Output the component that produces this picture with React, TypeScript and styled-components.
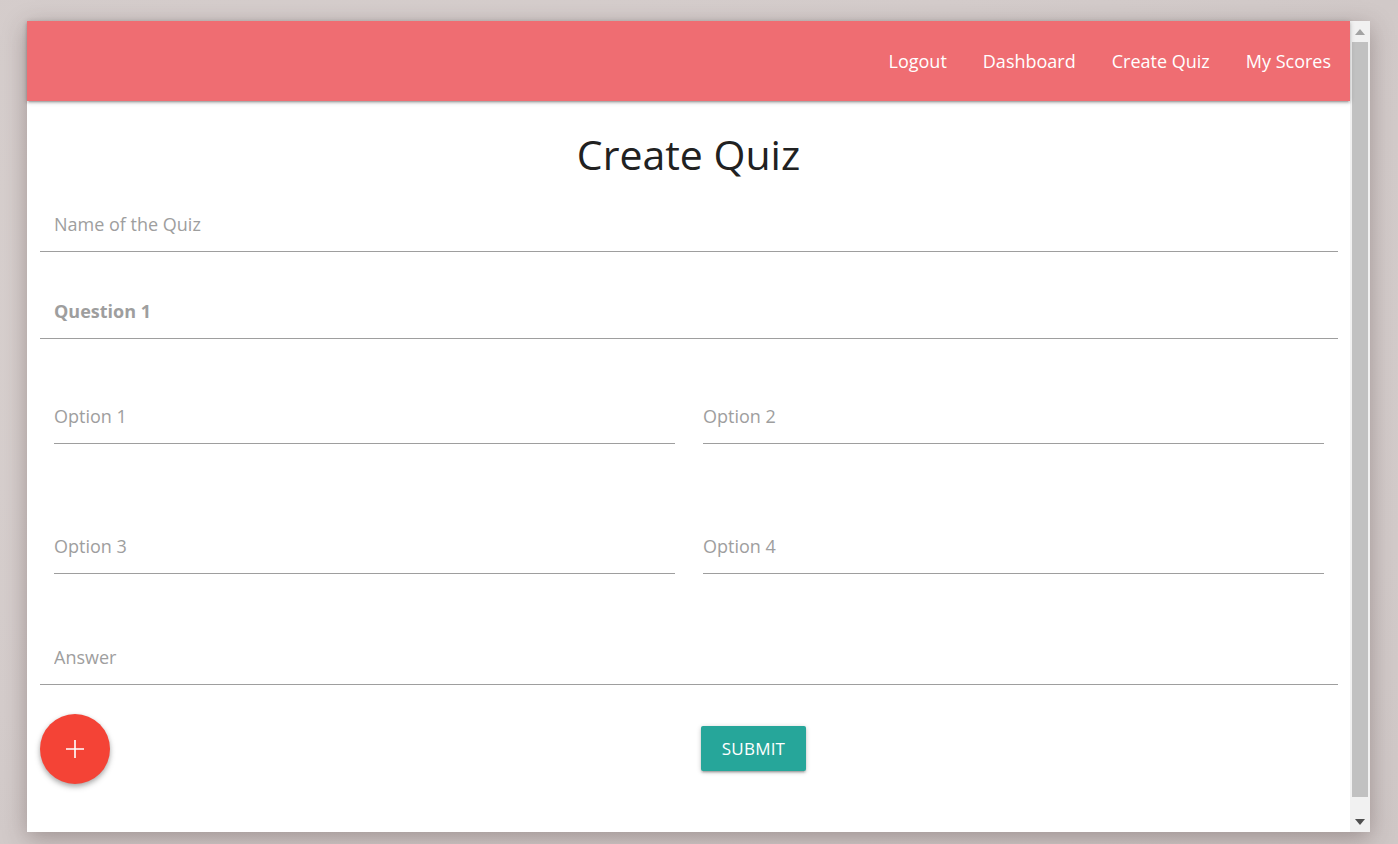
import { FC } from 'react'
import styled, { createGlobalStyle } from 'styled-components'

const GlobalStyle = createGlobalStyle`
  html, body {
    margin: 0;
    padding: 0;
    height: 100%;
  }
  body {
    background: #d5cdcb;
    font-family: 'Open Sans', 'Noto Sans', sans-serif;
    overflow: hidden;
  }
`

const Page = styled.div`
  width: 1398px;
  height: 844px;
  padding: 21px 28px 12px 27px;
  box-sizing: border-box;
  background: radial-gradient(ellipse at 30% 40%, #d9d1cf 0%, #d4cccb 60%, #cfc7c6 100%);
`

const Window = styled.div`
  display: flex;
  width: 1343px;
  height: 811px;
  background: #fff;
  box-shadow: 0 6px 22px rgba(60, 40, 40, 0.35);
`

const Main = styled.div`
  flex: 1;
  display: flex;
  flex-direction: column;
  min-width: 0;
`

const Nav = styled.nav`
  height: 80px;
  flex-shrink: 0;
  background: #ef6d72;
  display: flex;
  justify-content: flex-end;
  align-items: center;
  padding-right: 1px;
  box-shadow: 0 2px 2px 0 rgba(0, 0, 0, 0.14), 0 3px 1px -2px rgba(0, 0, 0, 0.12),
    0 1px 5px 0 rgba(0, 0, 0, 0.2);
  position: relative;
  z-index: 1;
`

const NavLink = styled.a`
  color: #fff;
  font-size: 18px;
  padding: 0 18px;
  text-decoration: none;
  line-height: 80px;
`

const Title = styled.h1`
  margin: 28px 0 18px;
  font-size: 41px;
  line-height: 50px;
  font-weight: 400;
  color: #212121;
  text-align: center;
`

const Form = styled.form`
  padding: 0 12px 0 13px;
  display: flex;
  flex-direction: column;
`

const Input = styled.input<{ $bold?: boolean; $gap?: number }>`
  display: block;
  width: 100%;
  box-sizing: border-box;
  height: 55px;
  margin: ${(p) => p.$gap ?? 0}px 0 0;
  padding: 0 0 0 14px;
  border: none;
  border-bottom: 1px solid #9e9e9e;
  outline: none;
  background: transparent;
  font-family: inherit;
  font-size: 18px;
  font-weight: ${(p) => (p.$bold ? 700 : 400)};
  color: #424242;

  &::placeholder {
    color: #9e9e9e;
    opacity: 1;
  }
`

const Row = styled.div<{ $gap: number }>`
  display: grid;
  grid-template-columns: 1fr 1fr;
  margin-top: ${(p) => p.$gap}px;
`

const Col = styled.div`
  padding: 0 14px;

  ${Input} {
    padding-left: 0;
  }
`

const Footer = styled.div`
  display: grid;
  grid-template-columns: 1fr 1fr;
  margin-top: 29px;
`

const Fab = styled.button`
  width: 70px;
  height: 70px;
  border-radius: 50%;
  border: none;
  background: #f44336;
  display: flex;
  align-items: center;
  justify-content: center;
  padding: 0;
  box-shadow: 0 3px 6px rgba(0, 0, 0, 0.22), 0 2px 4px rgba(0, 0, 0, 0.16);
  cursor: pointer;
`

const SubmitButton = styled.button`
  justify-self: start;
  margin: 12px 0 0 12px;
  width: 105px;
  height: 45px;
  border: none;
  border-radius: 2px;
  background: #26a69a;
  color: #fff;
  font-family: inherit;
  font-size: 17px;
  letter-spacing: 0.2px;
  box-shadow: 0 2px 2px 0 rgba(0, 0, 0, 0.14), 0 3px 1px -2px rgba(0, 0, 0, 0.12),
    0 1px 5px 0 rgba(0, 0, 0, 0.2);
  cursor: pointer;
`

const Scrollbar = styled.div`
  width: 20px;
  flex-shrink: 0;
  background: #f1f1f1;
  display: flex;
  flex-direction: column;
  align-items: center;
`

const Arrow = styled.div`
  height: 21px;
  display: flex;
  align-items: center;
  justify-content: center;
  flex-shrink: 0;
`

const Thumb = styled.div`
  width: 16px;
  flex: 1;
  background: #c1c1c1;
  margin-bottom: 14px;
`

const Plus = () => (
  <svg width="18" height="18" viewBox="0 0 18 18">
    <path d="M9 0v18M0 9h18" stroke="#fff" strokeWidth="1.6" />
  </svg>
)

const links = ['Logout', 'Dashboard', 'Create Quiz', 'My Scores']

const App: FC = () => {
  return (
    <>
      <GlobalStyle />
      <Page>
        <Window>
          <Main>
            <Nav>
              {links.map((l) => (
                <NavLink key={l} href="#">
                  {l}
                </NavLink>
              ))}
            </Nav>
            <Title>Create Quiz</Title>
            <Form onSubmit={(e) => e.preventDefault()}>
              <Input placeholder="Name of the Quiz" />
              <Input placeholder="Question 1" $bold $gap={32} />
              <Row $gap={50}>
                <Col>
                  <Input placeholder="Option 1" />
                </Col>
                <Col>
                  <Input placeholder="Option 2" />
                </Col>
              </Row>
              <Row $gap={75}>
                <Col>
                  <Input placeholder="Option 3" />
                </Col>
                <Col>
                  <Input placeholder="Option 4" />
                </Col>
              </Row>
              <Input placeholder="Answer" $gap={56} />
              <Footer>
                <div>
                  <Fab type="button">
                    <Plus />
                  </Fab>
                </div>
                <SubmitButton type="submit">SUBMIT</SubmitButton>
              </Footer>
            </Form>
          </Main>
          <Scrollbar>
            <Arrow>
              <svg width="10" height="6" viewBox="0 0 10 6">
                <path d="M5 0L10 6H0z" fill="#a3a3a3" />
              </svg>
            </Arrow>
            <Thumb />
            <Arrow>
              <svg width="10" height="6" viewBox="0 0 10 6">
                <path d="M0 0h10L5 6z" fill="#505050" />
              </svg>
            </Arrow>
          </Scrollbar>
        </Window>
      </Page>
    </>
  )
}

export default App
